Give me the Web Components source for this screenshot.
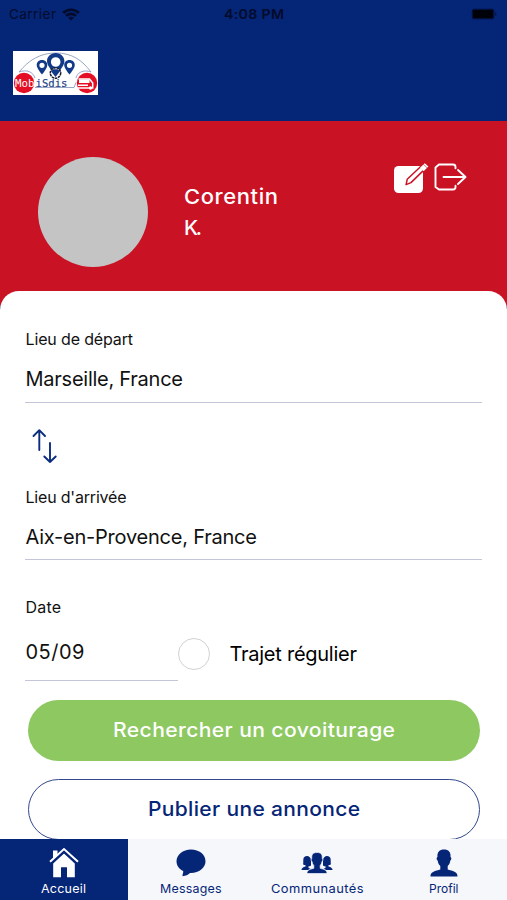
<!DOCTYPE html>
<html lang="fr">
<head>
<meta charset="utf-8">
<title>MobiSdis</title>
<style>
html,body{margin:0;height:100%;overflow:hidden;background:#052576}
body{font-family:Inter,"Liberation Sans",sans-serif;--blue:#052576;--red:#ca1225;--green:#8dc861;--rule:#c3c6d8}
</style>
</head>
<body>
<mobi-app></mobi-app>
<script>
const define = (name, html, setup) => customElements.define(name, class extends HTMLElement {
  connectedCallback() {
    if (this.shadowRoot) return;
    const t = document.createElement('template');
    t.innerHTML = html;
    this.attachShadow({ mode: 'open' }).append(t.content.cloneNode(true));
    if (setup) setup(this);
  }
});

/* One line of text that fills the given width: tracked, or with "wide" also stretched. */
define('fit-text', `<style>:host{display:inline-block;white-space:nowrap;line-height:1.2;text-align:left}span{display:inline-block;transform-origin:0 50%}</style><span><slot></slot></span>`, el => {
  const span = el.shadowRoot.querySelector('span'), w = +el.getAttribute('width');
  const natural = span.getBoundingClientRect().width, n = el.textContent.length;
  const stretch = el.hasAttribute('wide') ? 1 + (w / natural - 1) * 0.6 : 1;
  span.style.letterSpacing = ((w / stretch - natural) / (n - 1)) + 'px';
  if (stretch !== 1) span.style.transform = `scaleX(${stretch})`;
  el.style.width = w + 'px';
});

define('status-bar', `<style>
:host{display:grid;grid-template-columns:1fr auto 1fr;align-items:center;height:28px;padding:0 9px;box-sizing:border-box;color:#020b2b;font-size:13.5px}
.l{display:flex;align-items:center;gap:6px}.r{justify-self:end;margin-right:1px;display:flex}.t{font-weight:600}
</style>
<div class="l"><fit-text width="47">Carrier</fit-text>
<svg width="18" height="13" viewBox="0 0 18 13" fill="none" stroke="#020b2b" stroke-width="2.6"><path d="M1.2 5C5.500.6 12.500.6 16.800 5M4.100 7.900c2.800-2.700 7-2.700 9.800 0"/><path d="M9 12.400 6.200 9.800c1.600-1.400 4-1.400 5.600 0z" fill="#020b2b" stroke="none"/></svg></div>
<fit-text class="t" width="60" wide>4:08 PM</fit-text>
<div class="r"><svg width="26" height="12" viewBox="0 0 26 12"><rect x=".8" y=".8" width="22.5" height="10.4" rx="2.5" fill="#030f3c"/><rect x="2" y="2" width="20" height="8" rx="1.3" fill="#00020a"/><path d="M24.300 4v4q1-.6 1-2t-1-2" fill="#030f3c"/></svg></div>`);

define('brand-logo', `<style>:host{display:block;width:85px;height:44px}svg{display:block}text{font-family:"DejaVu Sans Mono",monospace;font-size:11px}</style>
<svg width="85" height="44" viewBox="0 0 85 44"><rect width="85" height="44" fill="#fff"/>
<g fill="none" stroke="#8d9bc1" stroke-width=".9"><path d="M6 21C16 9 27 2 43 2s26 7 35 19M6 21c8-3 14 0 16 6M22 36.500h39l2-5M63 27c1-5 7-9 15-6"/></g>
<circle cx="11" cy="32" r="10.200" fill="#e40f24"/><circle cx="74" cy="32" r="10.200" fill="#e40f24"/>
<g fill="#123a88" fill-rule="evenodd"><path id="p" d="M29 9c-3.200 0-5.300 2.200-5.300 5.100 0 3.600 5.300 9.400 5.300 9.400s5.300-5.800 5.300-9.400C34.300 11.200 32.200 9 29 9m0 2.700a2.600 2.600 0 1 1 0 5.200 2.600 2.600 0 0 1 0-5.200"/><use href="#p" x="27.500"/><path d="M42.700 2c-5.200 0-8.700 3.700-8.700 8.200 0 5.300 6.700 10.800 8.700 15.800 2-5 8.700-10.500 8.700-15.800 0-4.500-3.500-8.200-8.700-8.200m0 4.200a4.800 4.800 0 1 1 0 9.600 4.800 4.800 0 0 1 0-9.600"/></g>
<circle cx="42.500" cy="22" r="5.200" fill="#fff" stroke="#171d2c" stroke-width="1.500" stroke-dasharray="2.500 .6"/><path d="m38 20.300 2-2h5l2 2-4.500 5.700z" fill="#123a88"/>
<path d="M65.500 28h11l3.200 4v5H65" fill="none" stroke="#fff" stroke-width="1.500"/><path d="M66 28.500h10.500V32H66zM65 33.500h10V35H65z" fill="#fff"/><circle cx="77.500" cy="37" r="1.700" fill="#fff"/>
<text x="2" y="36" textLength="19.500" lengthAdjust="spacingAndGlyphs" fill="#fff">Mob</text><text x="22.500" y="36" textLength="32" lengthAdjust="spacingAndGlyphs" fill="#244588" stroke="#244588" stroke-width=".2">iSdis</text></svg>`);

define('app-header', `<style>:host{display:block;height:93px;padding:23px 13px 0;box-sizing:border-box}</style><brand-logo></brand-logo>`);

define('profile-banner', `<style>
:host{display:flex;height:185px;background:var(--red);color:#fff;box-sizing:border-box;padding:36px 39px 0 37.5px}
.avatar{width:110px;height:110px;border-radius:50%;background:#c4c4c4;flex:none}
.name{display:flex;flex-direction:column;margin:25px 0 0 36.500px;font-size:20.5px;font-weight:500}
.name fit-text{height:30.500px;line-height:30.500px}
.actions{display:flex;margin-left:auto;gap:4px;padding-top:2px}
</style>
<div class="avatar"></div>
<div class="name"><fit-text width="94" wide>Corentin</fit-text><fit-text width="18">K.</fit-text></div>
<div class="actions">
<svg width="37" height="36" viewBox="0 0 37 36"><rect x="1" y="7" width="29" height="27" rx="4.500" fill="#fff"/><path d="m14.200 20.300 13.300-12.500 3.300 3.300-12.800 12.500-4.900 2z" fill="#fff" stroke="#ca1225" stroke-width="1.500" stroke-linejoin="round"/><path d="m27 8.800 4.800-4.600 3.600 3.400-4.800 4.600z" fill="#fff"/><path d="m30.300 5.200 4.200 4" stroke="#ca1225" stroke-width=".6"/></svg>
<svg width="34" height="36" viewBox="0 0 34 36" fill="none" stroke="#fff" stroke-width="1.900" stroke-linecap="round" stroke-linejoin="round"><path d="M21.500 9.300V8q0-2.500-2.500-2.500H5L1.500 8.500V28L5 30.500h14q2.500 0 2.500-2.500v-1.300M9.500 18h22M24 11l7.500 7-7.500 7"/></svg>
</div>`);

define('form-field', `<style>
:host{display:block;border-bottom:1.500px solid var(--rule);box-sizing:border-box;color:#111}
div{display:flex;padding-left:.5px}.l{height:20px;font-size:16px;align-items:center}.v{font-size:20px;height:26px;align-items:center;margin-top:var(--gap,16.500px)}
</style><div class="l"><slot name="label"></slot></div><div class="v"><slot></slot></div>`);

define('pill-button', `<style>
:host{display:flex;align-items:center;justify-content:center;height:61px;margin:0 2px 0 2.500px;border-radius:31px;box-sizing:border-box;font-size:20px;font-weight:500;background:var(--green);color:#fff;padding-bottom:1px}
:host([outline]){background:#fff;color:var(--blue);border:1.500px solid #33488e}
</style><slot></slot>`);

define('search-card', `<style>
:host{display:block;flex:1;min-height:0;overflow:hidden;background:#fff;border-radius:19px 19px 0 0;margin-top:-15px;padding:38.500px 25px 0 25px;box-sizing:border-box;position:relative}
.swap{height:85px;display:flex;box-sizing:border-box;padding:25px 0 0 7px}
form-field{height:73px}
.arrival{height:72px;--gap:16px}
.row{display:flex;margin-top:38px}
.date{width:152.500px;height:83px;--gap:21px}
.radio{width:32px;height:32px;box-sizing:border-box;border:1.500px solid #d2d2d2;border-radius:50%;margin-top:40px}
.regular{font-size:20px;margin:44px 0 0 20px}
.green{margin-top:19px}.outline{margin-top:18px}
</style>
<form-field><fit-text slot="label" width="107.500">Lieu de départ</fit-text><fit-text width="157.500">Marseille, France</fit-text></form-field>
<div class="swap"><svg width="26" height="36" viewBox="0 0 26 36" fill="none" stroke="#0b2d7e" stroke-width="1.900" stroke-linecap="round" stroke-linejoin="round"><path d="M7.300 22V2.500M1.500 8l5.800-5.800L13 8M18 15v19M12.300 28.500l5.700 5.500 5.700-5.500"/></svg></div>
<form-field class="arrival"><fit-text slot="label" width="101">Lieu d'arrivée</fit-text><fit-text width="231.500">Aix-en-Provence, France</fit-text></form-field>
<div class="row"><form-field class="date"><fit-text slot="label" width="35.500">Date</fit-text><fit-text width="59">05/09</fit-text></form-field><div class="radio"></div><fit-text class="regular" width="127.500">Trajet régulier</fit-text></div>
<pill-button class="green"><fit-text width="282" wide>Rechercher un covoiturage</fit-text></pill-button>
<pill-button class="outline" outline><fit-text width="212" wide>Publier une annonce</fit-text></pill-button>`);

define('nav-item', `<style>
:host{display:flex;flex-direction:column;align-items:center;height:61px;box-sizing:border-box;padding-top:7px;color:var(--blue);font-size:12px}
:host([active]){background:var(--blue);color:#fff}
.icon{height:33px;display:flex;align-items:center;justify-content:center}
.label{height:21px;display:flex;align-items:center}
</style><div class="icon"><slot name="icon"></slot></div><div class="label"><slot></slot></div>`);

define('tab-bar', `<style>:host{display:grid;grid-template-columns:127.500px 126px 127px 126.500px;background:#f5f7fb;flex:none}</style>
<nav-item active><svg slot="icon" width="32" height="32" viewBox="0 0 32 32" fill="#fff"><path d="M5.200 16.500 16 6.500l10.800 10V30.300H19V20.200h-6v10.100H5.200z"/><path d="M5 3.500h4.500v5.200L5 12.500z"/><path d="M2 14.800 16 2l14 12.800" fill="none" stroke="#fff" stroke-width="2"/><path d="M4 16.300 16 5.300l12 11" fill="none" stroke="#052576" stroke-width="1"/></svg><fit-text width="45" wide>Accueil</fit-text></nav-item>
<nav-item><svg slot="icon" width="30" height="28" viewBox="0 0 30 28" fill="#052576"><path d="M15 .5C6.800.5.500 5.800.500 12.300c0 4.200 2.600 7.700 6.700 9.800.3 2-1 3.700-.7 5.200 3.400-.4 5.500-1.600 7.500-3.300 8.700.4 15.500-4.900 15.500-11.700S23.200.5 15 .5"/></svg><fit-text width="61.500" wide>Messages</fit-text></nav-item>
<nav-item><svg slot="icon" width="32" height="22" viewBox="0 0 32 22" fill="#052576"><path d="M7 18H.5q0-2.500 4-3.500V13C2 13 2 12.500 2.300 10.500V8C2.300 5 4 4 6 4s4 1.500 4 4.500v5c-1 .8-2.500.8-2.500.8V16l2 .8z"/><path d="M25 18h6.500q0-2.500-4-3.500V13c2.500 0 2.500-.5 2.200-2.500V8c0-3-1.700-4-3.700-4s-4 1.500-4 4.500v5c1 .8 2.500.8 2.500.8V16l-2 .8z"/><path d="M6 21.500c0-3.300 2.300-4 6.800-5.200V13.500C11.800 12.500 11.300 11 11 9.500 9.800 9 10 6.500 10.800 6.500 10.300 2.500 12 .5 16 .5s5.700 2 5.200 6c.8 0 1 2.500-.2 3-.3 1.500-.8 3-1.800 4v2.800c4.500 1.200 6.800 1.900 6.800 5.200z" stroke="#f5f7fb" stroke-width=".7"/></svg><fit-text width="92.500" wide>Communautés</fit-text></nav-item>
<nav-item><svg slot="icon" width="28" height="28" viewBox="0 0 28 28" fill="#052576"><path d="M.5 27.500c0-4 2.500-5.200 9.800-7V17C8.500 15.500 8 13.500 7.700 11.500 6.300 11 6.500 8 7.500 8 7 3 9.500.5 14 .5S21 3 20.500 8c1 0 1.200 3-.2 3.500-.3 2-.8 4-2.600 5.500v3.500c7.300 1.800 9.800 3 9.800 7z"/></svg><fit-text width="29.500" wide>Profil</fit-text></nav-item>`);

define('mobi-app', `<style>:host{display:flex;flex-direction:column;width:507px;height:900px;background:var(--blue)}</style>
<status-bar></status-bar><app-header></app-header><profile-banner></profile-banner><search-card></search-card><tab-bar></tab-bar>`);
</script>
</body>
</html>
